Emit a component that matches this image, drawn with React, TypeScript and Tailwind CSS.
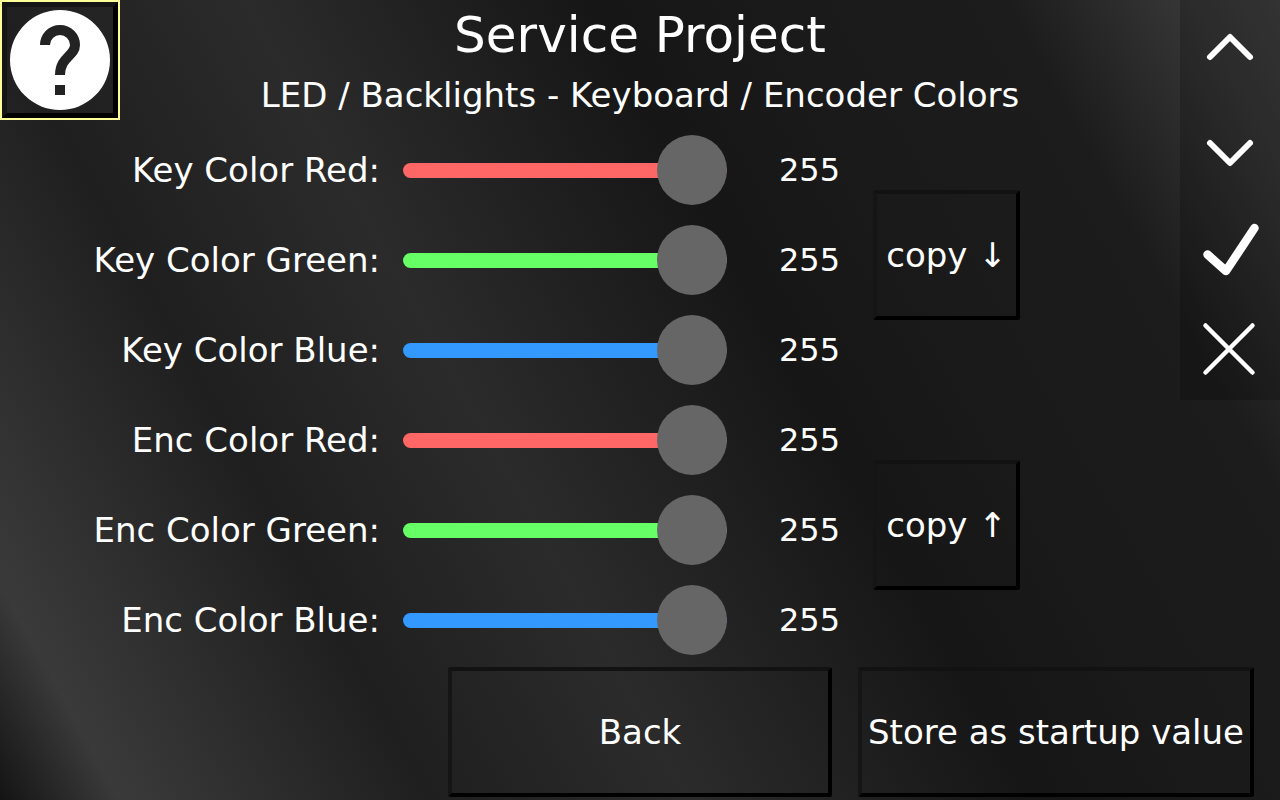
import { useState } from "react";
import type { ReactNode } from "react";
import clsx from "clsx";

const CHANNELS = [
  { id: "key-red", label: "Key Color Red:", track: "[&::-webkit-slider-runnable-track]:bg-[#ff6666]" },
  { id: "key-green", label: "Key Color Green:", track: "[&::-webkit-slider-runnable-track]:bg-[#66ff66]" },
  { id: "key-blue", label: "Key Color Blue:", track: "[&::-webkit-slider-runnable-track]:bg-[#3399ff]" },
  { id: "enc-red", label: "Enc Color Red:", track: "[&::-webkit-slider-runnable-track]:bg-[#ff6666]" },
  { id: "enc-green", label: "Enc Color Green:", track: "[&::-webkit-slider-runnable-track]:bg-[#66ff66]" },
  { id: "enc-blue", label: "Enc Color Blue:", track: "[&::-webkit-slider-runnable-track]:bg-[#3399ff]" },
];

const NAV = [
  { label: "Up", d: "M30 57 50 37 70 57", width: 6 },
  { label: "Down", d: "M30 43 50 63 70 43", width: 6 },
  { label: "Confirm", d: "M27.5 54.5 46 71 74.5 28", width: 8.5 },
  { label: "Cancel", d: "M25.5 25.5 72.5 72.5M72.5 25.5 25.5 72.5", width: 4.5 },
];

const slider = clsx(
  "h-[70px] w-[324px] shrink-0 cursor-pointer appearance-none bg-transparent",
  "[&::-webkit-slider-runnable-track]:h-[15px] [&::-webkit-slider-runnable-track]:rounded-full",
  "[&::-webkit-slider-thumb]:-mt-7 [&::-webkit-slider-thumb]:size-[70px] [&::-webkit-slider-thumb]:appearance-none",
  "[&::-webkit-slider-thumb]:rounded-full [&::-webkit-slider-thumb]:bg-[#666666]"
);

function PanelButton({ className, onClick, children }: { className: string; onClick?: () => void; children: ReactNode }) {
  return (
    <button
      onClick={onClick}
      className={clsx(
        "h-[130px] rounded-[3px] border-4 border-t-[#121212] border-r-black border-b-black border-l-[#151515] whitespace-nowrap",
        className
      )}
    >
      {children}
    </button>
  );
}

export default function App() {
  const [values, setValues] = useState<number[]>([255, 255, 255, 255, 255, 255]);

  const setValue = (index: number, value: number) =>
    setValues((prev) => prev.map((v, i) => (i === index ? value : v)));

  // first three channels are the keys, last three the encoders
  const copyDown = () => setValues((prev) => [...prev.slice(0, 3), ...prev.slice(0, 3)]);
  const copyUp = () => setValues((prev) => [...prev.slice(3), ...prev.slice(3)]);

  return (
    <div className="min-h-screen bg-[linear-gradient(61deg,#141414_0%,#3a3a3a_7%,#1f1f1f_25%,#2b2b2b_40%,#161616_60%,#1a1a1a_71%,#1c1c1c_84%,#353535_94%,#404040_100%)] font-['DejaVu_Sans',sans-serif] text-[34px] leading-10 text-white">
      <div className="flex items-start">
        <div className="min-w-0 flex-1">
          <header className="flex h-[125px] items-start pr-5">
            <button aria-label="Help" className="size-[120px] shrink-0 border-2 border-[#ffff99]">
              <span className="block size-full border-5 border-t-[#151515] border-r-black border-b-black border-l-[#151515]">
                <svg viewBox="7 7 106 106" className="size-full" fill="none">
                  <circle cx="60" cy="60" r="50" fill="#ffffff" />
                  <path d="M45 45a15 15 0 0 1 30 0C75 56 60 57 60 75" stroke="#232323" strokeWidth="10" />
                  <rect x="55" y="85" width="10" height="10" fill="#232323" />
                </svg>
              </span>
            </button>
            <div className="flex-1 text-center whitespace-nowrap">
              <h1 className="text-[50px] leading-[70px]">Service Project</h1>
              <h2 className="leading-[50px]">LED / Backlights - Keyboard / Encoder Colors</h2>
            </div>
          </header>

          <div className="flex items-start">
            <div>
              {CHANNELS.map((c, i) => (
                <div key={c.id} className="flex h-[90px] items-center">
                  <label htmlFor={c.id} className="w-[380px] text-right whitespace-nowrap">
                    {c.label}
                  </label>
                  <input
                    id={c.id}
                    type="range"
                    min={0}
                    max={255}
                    value={values[i]}
                    onChange={(e) => setValue(i, Number(e.target.value))}
                    className={clsx(slider, c.track, "ml-[23px]")}
                  />
                  <output htmlFor={c.id} className="ml-[52px] w-[94px] text-[32px]">
                    {values[i]}
                  </output>
                </div>
              ))}
            </div>
            <div className="flex flex-col gap-[140px] pt-[65px]">
              <PanelButton className="w-[147px]" onClick={copyDown}>
                copy ↓
              </PanelButton>
              <PanelButton className="w-[147px]" onClick={copyUp}>
                copy ↑
              </PanelButton>
            </div>
          </div>
        </div>

        <nav className="flex w-[100px] shrink-0 flex-col bg-black/20">
          {NAV.map((n) => (
            <button key={n.label} aria-label={n.label} className="size-[100px]">
              <svg
                viewBox="0 0 100 100"
                className="size-full"
                fill="none"
                stroke="#ffffff"
                strokeWidth={n.width}
                strokeLinecap="round"
                strokeLinejoin="round"
              >
                <path d={n.d} />
              </svg>
            </button>
          ))}
        </nav>
      </div>

      <footer className="flex justify-end gap-[26px] pt-0.5 pr-[26px]">
        <PanelButton className="w-96">Back</PanelButton>
        <PanelButton className="w-[396px]">Store as startup value</PanelButton>
      </footer>
    </div>
  );
}
